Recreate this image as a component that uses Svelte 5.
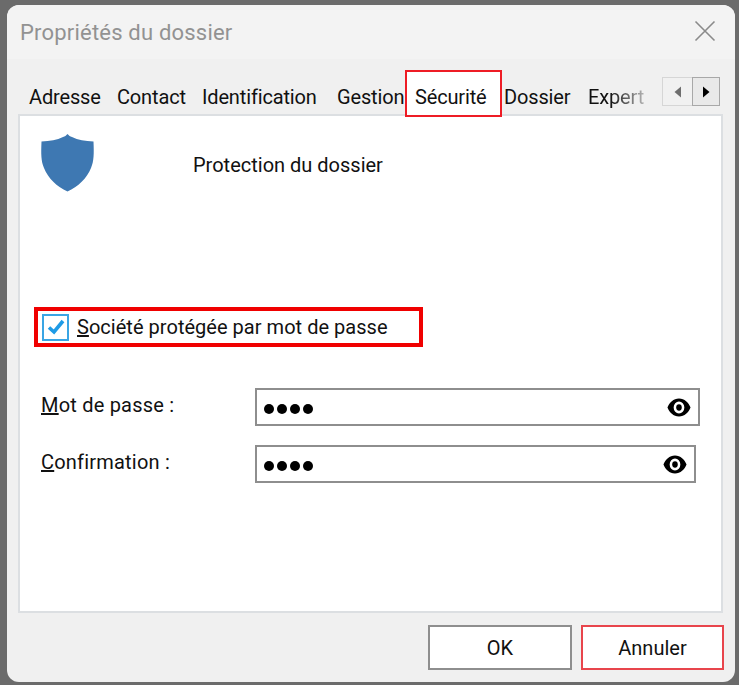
<script>
	const tabs = ['Adresse', 'Contact', 'Identification', 'Gestion', 'Sécurité', 'Dossier', 'Expert'];
	const fields = [
		{ key: 'M', rest: 'ot de passe :', narrow: false },
		{ key: 'C', rest: 'onfirmation :', narrow: true }
	];
</script>

<div class="page">
	<div class="window">
		<header class="titlebar">
			<span class="title">Propriétés du dossier</span>
			<svg class="close" width="22" height="22" viewBox="0 0 22 22" aria-hidden="true">
				<path d="M1.5 1.5 L20.5 20.5 M20.5 1.5 L1.5 20.5" stroke="#8a8a8a" stroke-width="1.6" fill="none" />
			</svg>
		</header>

		<div class="tabrow">
			{#each tabs as tab}
				<div class="tab" class:active={tab === 'Sécurité'} class:faded={tab === 'Expert'}>{tab}</div>
			{/each}
			<div class="scroller">
				<div class="arrow off">
					<svg width="8" height="12" viewBox="0 0 8 12"><path d="M7 0.5 L7 11.5 L0.5 6 Z" fill="#6e6e6e" /></svg>
				</div>
				<div class="arrow on">
					<svg width="8" height="12" viewBox="0 0 8 12"><path d="M1 0.5 L1 11.5 L7.5 6 Z" fill="#000" /></svg>
				</div>
			</div>
		</div>

		<main class="panel">
			<div class="heading">
				<svg class="shield" width="55" height="58" viewBox="0 0 55 58" aria-hidden="true">
					<path
						d="M27.5 0 C29 1.5 30 2.5 32 3 C38 6 45 7 53.5 7.5 C54 20 54 27 51 34 C47 44 38 53 27.5 57.5 C17 53 8 44 4 34 C1 27 1 20 1.5 7.5 C10 7 17 6 23 3 C25 2.5 26 1.5 27.5 0 Z"
						fill="#3e78b2"
					/>
				</svg>
				<span class="heading-text">Protection du dossier</span>
			</div>

			<div class="protect">
				<span class="checkbox">
					<svg width="18" height="16" viewBox="0 0 18 16" aria-hidden="true">
						<path d="M2 8.5 L7 13 L16 2" stroke="#1f9be6" stroke-width="3.6" fill="none" />
					</svg>
				</span>
				<span class="protect-label"><u>S</u>ociété protégée par mot de passe</span>
			</div>

			<div class="fields">
				{#each fields as field}
					<div class="field">
						<span class="field-label"><u>{field.key}</u>{field.rest}</span>
						<div class="input" class:narrow={field.narrow}>
							<span class="dots">
								<i></i><i></i><i></i><i></i>
							</span>
							<svg width="24" height="19" viewBox="0 0 26 18" preserveAspectRatio="none" aria-hidden="true">
								<path
									fill-rule="evenodd"
									d="M13 0.5 C19 0.5 23.5 4.5 25.5 9 C23.5 13.5 19 17.5 13 17.5 C7 17.5 2.5 13.5 0.5 9 C2.5 4.5 7 0.5 13 0.5 Z M13 3.2 A5.8 5.8 0 1 0 13 14.8 A5.8 5.8 0 1 0 13 3.2 Z"
									fill="#000"
								/>
								<circle cx="13" cy="9" r="3" fill="#000" />
							</svg>
						</div>
					</div>
				{/each}
			</div>
		</main>

		<footer class="buttons">
			<button class="btn">OK</button>
			<button class="btn cancel">Annuler</button>
		</footer>
	</div>
</div>

<style>
	:global(body) {
		margin: 0;
		background: #6b6b6b;
	}
	.page {
		width: 739px;
		height: 685px;
		box-sizing: border-box;
		padding: 5px 4px 3px 7px;
		font-family: Roboto, 'Liberation Sans', sans-serif;
		font-size: 20px;
		color: #111;
	}
	.window {
		height: 100%;
		box-sizing: border-box;
		background: #f0f0f0;
		border-radius: 12px;
		padding: 0 12px 0 11px;
		overflow: hidden;
		display: flex;
		flex-direction: column;
	}
	.titlebar {
		height: 54px;
		margin: 0 -12px 0 -11px;
		padding: 0 19px 0 14px;
		background: #f3f3f3;
		display: flex;
		align-items: center;
		justify-content: space-between;
	}
	.title {
		font-size: 22px;
		letter-spacing: 0.2px;
		color: #929292;
		margin-left: -1px;
	}
	.close {
		margin-top: -2px;
	}

	.tabrow {
		height: 55px;
		display: grid;
		grid-template-columns: 88px 85px 135px 68px 99px 84px 74px 1fr;
		align-items: end;
		padding-left: 11px;
		position: relative;
		z-index: 1;
	}
	.tab {
		height: 29px;
		white-space: nowrap;
		letter-spacing: -0.15px;
	}
	.tab.active {
		width: 97px;
		height: 47px;
		margin-bottom: -3px;
		box-sizing: border-box;
		border: 2px solid #ee1c25;
		background: #fff;
		padding: 13px 0 0 8px;
	}
	.tab.faded {
		mask-image: linear-gradient(to right, #000 30%, rgba(0, 0, 0, 0.12) 85%);
	}
	.scroller {
		align-self: start;
		margin-top: 18px;
		justify-self: end;
		margin-right: 3px;
		display: flex;
		width: 58px;
		height: 29px;
	}
	.arrow {
		display: flex;
		align-items: center;
		justify-content: center;
		box-sizing: border-box;
	}
	.arrow.off {
		width: 30px;
		background: #f1f1f1;
		border: 1px solid #d6d6d6;
		border-right: none;
	}
	.arrow.on {
		width: 28px;
		background: #e9e9e9;
		border: 1px solid #a8a8a8;
	}

	.panel {
		height: 499px;
		box-sizing: border-box;
		border: 2px solid #dcdfe2;
		background: #fff;
		padding: 18px 21px 0;
	}
	.heading {
		display: flex;
		align-items: center;
		gap: 98px;
		height: 58px;
		margin-left: -1px;
		margin-bottom: 115px;
	}
	.heading-text {
		margin-top: 3px;
	}
	.protect {
		width: 389px;
		height: 40px;
		box-sizing: border-box;
		margin-left: -7px;
		border: 4px solid #f00000;
		display: flex;
		align-items: center;
		gap: 8px;
		padding-left: 4px;
	}
	.checkbox {
		width: 27px;
		height: 27px;
		box-sizing: border-box;
		border: 2px solid #3aa5e4;
		background: #fff;
		display: flex;
		align-items: center;
		justify-content: center;
	}
	.protect-label {
		letter-spacing: 0.03px;
	}
	.fields {
		margin-top: 41px;
		display: flex;
		flex-direction: column;
		gap: 19px;
	}
	.field {
		display: flex;
		align-items: center;
	}
	.field-label {
		width: 214px;
		margin-top: -4px;
		letter-spacing: 0.2px;
	}
	.input {
		width: 445px;
		height: 38px;
		box-sizing: border-box;
		border: 2px solid #8e8e8e;
		background: #fff;
		display: flex;
		align-items: center;
		justify-content: space-between;
		padding: 0 7px 0 7px;
	}
	.input.narrow {
		width: 441px;
	}
	.dots {
		display: flex;
		gap: 3px;
		margin-top: 3px;
	}
	.dots i {
		width: 10px;
		height: 10px;
		border-radius: 50%;
		background: #000;
	}

	.buttons {
		flex: 1;
		display: flex;
		justify-content: flex-end;
		align-items: flex-start;
		gap: 9px;
		padding-top: 12px;
		margin-right: -1px;
	}
	.btn {
		width: 144px;
		height: 45px;
		box-sizing: border-box;
		border: 2px solid #8e8e8e;
		background: #fff;
		font: inherit;
		color: inherit;
		padding: 0;
	}
	.btn.cancel {
		width: 143px;
		border-color: #e8454c;
	}
</style>
